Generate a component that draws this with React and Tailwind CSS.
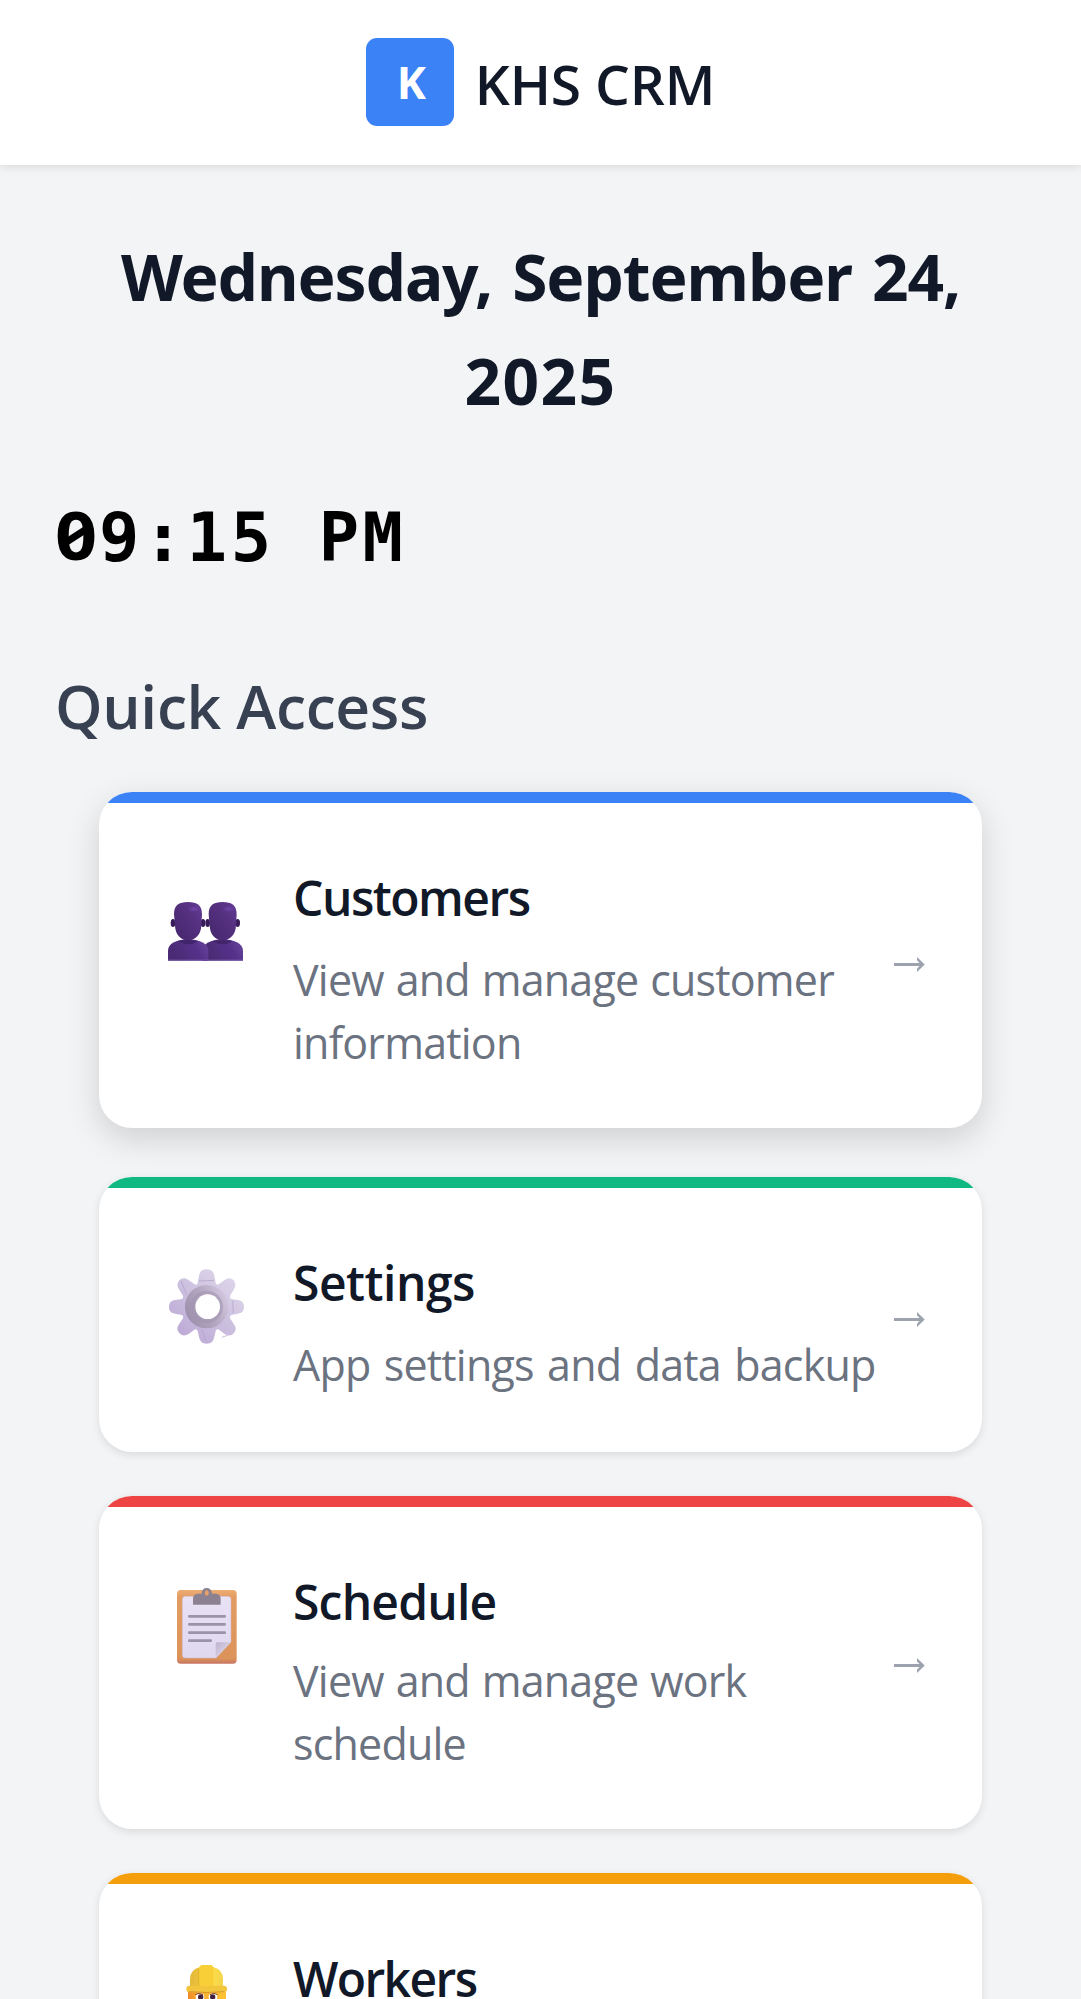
import React from "react";

function PeopleIcon() {
  return (
    <svg viewBox="54 12 228 228" className="h-[76px] w-[76px] overflow-visible">
      <defs>
        <linearGradient id="headFill" x1="0" y1="1" x2="1" y2="0">
          <stop offset="0" stopColor="#44266b" />
          <stop offset="0.6" stopColor="#553080" />
          <stop offset="1" stopColor="#633c95" />
        </linearGradient>
        <linearGradient id="bodyFill" x1="0" y1="0.3" x2="1" y2="0">
          <stop offset="0" stopColor="#4a2a74" />
          <stop offset="0.6" stopColor="#55328a" />
          <stop offset="1" stopColor="#6a469f" />
        </linearGradient>
        <radialGradient id="headGlow">
          <stop offset="0" stopColor="#7145a8" />
          <stop offset="1" stopColor="#7145a8" stopOpacity="0" />
        </radialGradient>
        <g id="bust">
          <ellipse cx="69" cy="129" rx="7" ry="12" fill="#371c59" />
          <ellipse cx="159" cy="129" rx="7" ry="12" fill="#371c59" />
          <path d="M54 242v-30c0-22 28-34 60-34s61 12 61 34v30z" fill="url(#bodyFill)" />
          <path d="M84 184q30-10 60 0-28 18-60 0z" fill="#3b1f5f" opacity=".7" />
          <path d="M72 103c0-27 14-37 42-37s42 10 42 37l-2 34c-1 26-18 44-40 44s-38-18-39-44z" fill="url(#headFill)" />
          <ellipse cx="132" cy="87" rx="20" ry="9" fill="url(#headGlow)" />
        </g>
      </defs>
      <use href="#bust" x="104" />
      <use href="#bust" />
      <path d="M54 240h225" stroke="#7a5ba6" strokeWidth="2" />
    </svg>
  );
}

function GearIcon() {
  return (
    <svg viewBox="54 57 228 228" className="h-[76px] w-[76px] overflow-visible">
      <defs>
        <linearGradient id="gearFill" gradientUnits="userSpaceOnUse" x1="90" y1="260" x2="240" y2="80">
          <stop offset="0" stopColor="#bda9d6" />
          <stop offset="0.5" stopColor="#cbbfdf" />
          <stop offset="1" stopColor="#ddd5e9" />
        </linearGradient>
        <linearGradient id="ringFill" x1="0" y1="0.7" x2="1" y2="0.2">
          <stop offset="0" stopColor="#9c8fac" />
          <stop offset="0.5" stopColor="#b3a8c1" />
          <stop offset="1" stopColor="#d4cae1" />
        </linearGradient>
      </defs>
      <path
        fill="url(#gearFill)"
        d="M147 77c2-12 8-19 23-19s21 7 23 19l4 22c2 5 6 6 10 3l17-12c9-7 20-7 27 1 7 9 6 18 1 27l-11 18c-3 6 0 11 7 12l16 2c11 2 18 8 18 21s-7 18-18 20l-16 3c-7 1-10 6-7 12l12 18c6 9 5 18-1 25-7 9-18 9-28 3l-16-12c-5-4-10-2-11 4l-5 20c-3 12-10 17-22 17s-19-5-22-17l-5-20c-1-6-6-8-11-4l-16 12c-10 6-21 6-28-3-7-7-8-16-2-25l12-18c4-6 1-11-6-12l-17-3c-11-2-18-7-18-20s7-19 18-21l17-2c7-1 9-6 6-12l-11-18c-6-9-6-18 1-27 8-8 18-8 27-1l18 12c4 3 9 2 10-3z"
      />
      <path d="M93 92l17 42M147 93l45-2M248 152l2 38M156 240l14 38M215 262l18-6" fill="none" stroke="#ad9ec4" strokeWidth="2" />
      <circle cx="170" cy="170" r="65" fill="url(#ringFill)" />
      <circle cx="170" cy="171" r="44" fill="none" stroke="#a194b0" strokeWidth="10" opacity=".6" />
      <circle cx="173" cy="170" r="37" fill="#fff" />
    </svg>
  );
}

function ClipboardIcon() {
  return (
    <svg viewBox="54 54 228 228" className="h-[76px] w-[76px] overflow-visible">
      <defs>
        <linearGradient id="boardFill" x1="0" y1="0" x2="0" y2="1">
          <stop offset="0" stopColor="#edad75" />
          <stop offset="0.1" stopColor="#e29c61" />
          <stop offset="0.93" stopColor="#dc935a" />
          <stop offset="1" stopColor="#c67562" />
        </linearGradient>
        <linearGradient id="paperFill" x1="0" y1="0" x2="0" y2="1">
          <stop offset="0" stopColor="#e9e1f4" />
          <stop offset="1" stopColor="#e0d8ef" />
        </linearGradient>
        <linearGradient id="foldFill" x1="0" y1="0" x2="0.7" y2="0.7">
          <stop offset="0" stopColor="#bdb2cd" />
          <stop offset="1" stopColor="#dcd5e7" />
        </linearGradient>
      </defs>
      <rect x="81" y="60" width="179" height="221" rx="11" fill="url(#boardFill)" />
      <path d="M106 79h128q9 0 9 9v128l-45 48h-92q-9 0-9-9V88q0-9 9-9z" fill="url(#paperFill)" stroke="#cbb5c9" strokeWidth="1.5" />
      <path d="M197 264v-41q0-6 6-6h40z" fill="url(#foldFill)" />
      <path d="M118 139h106M118 163h106M118 188h106M118 212h64" stroke="#9b93a8" strokeWidth="8.5" strokeLinecap="round" />
      <path d="M129 104V86q0-14 14-15h12q1-17 15-17t16 17h11q15 1 15 15v18z" fill="#8c8190" />
      <ellipse cx="170.500" cy="69" rx="6" ry="8" fill="#e6a369" />
    </svg>
  );
}

function WorkerIcon() {
  return (
    <svg viewBox="234 315 228 228" className="h-[76px] w-[76px] overflow-visible">
      <defs>
        <linearGradient id="helmetFill" x1="0" y1="0" x2="1" y2="0">
          <stop offset="0" stopColor="#e3b93a" />
          <stop offset="0.3" stopColor="#efc23b" />
          <stop offset="0.75" stopColor="#fbdc4a" />
          <stop offset="1" stopColor="#f2d44d" />
        </linearGradient>
        <linearGradient id="faceFill" x1="0" y1="0" x2="1" y2="0">
          <stop offset="0" stopColor="#ef8a2b" />
          <stop offset="0.3" stopColor="#fbac2c" />
          <stop offset="1" stopColor="#ffc233" />
        </linearGradient>
      </defs>
      <path d="M294 395h114v60q0 40-57 40t-57-40z" fill="url(#faceFill)" />
      <ellipse cx="330" cy="411" rx="13" ry="11" fill="#fff" />
      <ellipse cx="369" cy="411" rx="13" ry="11" fill="#fff" />
      <circle cx="332" cy="411" r="8" fill="#43203c" />
      <circle cx="368" cy="411" r="8" fill="#43203c" />
      <path d="M316 404q11-8 23 0M360 404q12-8 23 0" fill="none" stroke="#7b4a34" strokeWidth="3" />
      <path d="M300 383v-25q0-30 30-37 3-6 10-6h20q7 0 10 6 29 7 29 37v25z" fill="url(#helmetFill)" />
      <path d="M326 378v-52q2-11 14-11h19q10 0 11 9v54z" fill="#f9cf38" />
      <path d="M326 378v-52" stroke="#d5a82e" strokeWidth="2" />
      <rect x="289" y="377" width="122" height="20" rx="9" fill="#f2c53d" />
      <path d="M298 395q52 5 105 0" stroke="#d39a2d" strokeWidth="3" fill="none" />
    </svg>
  );
}

function ArrowIcon() {
  return (
    <svg viewBox="0 0 31 15" className="h-[15px] w-[31px]" fill="#9ca3af">
      <path d="M0 6h25.500L23 3.200V0l7.700 7.500L23 15v-3.200L25.500 9H0z" />
    </svg>
  );
}

const cards = [
  {
    title: "Customers", lines: ["View and manage customer", "information"], Icon: PeopleIcon,
    box: "h-[335.5px] mb-[49.5px] shadow-[0_11px_33px_rgba(0,0,0,0.15)]", bar: "bg-[#3b82f6]",
    titleTrack: "tracking-[-1.5px]", desc: "mt-5 [word-spacing:1.5px]", arrow: "pb-[2px]",
  },
  {
    title: "Settings", lines: ["App settings and data backup"], Icon: GearIcon,
    box: "h-[275px] mb-11 shadow-[0_2.75px_8.25px_rgba(0,0,0,0.1)]", bar: "bg-[#10b981]",
    titleTrack: "tracking-[-0.5px]", desc: "mt-5 [word-spacing:3px]", arrow: "pb-[2px]",
  },
  {
    title: "Schedule", lines: ["View and manage work", "schedule"], Icon: ClipboardIcon,
    box: "h-[333px] mb-11 shadow-[0_2.75px_8.25px_rgba(0,0,0,0.1)]", bar: "bg-[#ef4444]",
    titleTrack: "tracking-[-0.8px]", desc: "mt-[17px] [word-spacing:1.5px]", arrow: "pb-[5px]",
  },
  {
    title: "Workers", lines: [], Icon: WorkerIcon,
    box: "h-[275px] shadow-[0_2.75px_8.25px_rgba(0,0,0,0.1)]", bar: "bg-[#f59e0b]",
    titleTrack: "tracking-[-1.6px]", desc: "mt-5", arrow: "pb-[2px]",
  },
];

function Card({ title, lines, Icon, box, bar, titleTrack, desc, arrow }) {
  return (
    <article className={`flex shrink-0 flex-col overflow-hidden rounded-[33px] bg-white ${box}`}>
      <div className={`h-[11px] shrink-0 ${bar}`} />
      <div className="flex flex-1 pr-[57px] pl-[69px]">
        <div className="w-[125px] shrink-0 pt-[81px]">
          <Icon />
        </div>
        <div className="flex-1 pt-[65px] whitespace-nowrap">
          <h3 className={`text-[48px] leading-[60px] font-semibold text-[#111827] ${titleTrack}`}>{title}</h3>
          <p className={`text-[43px] leading-[63px] tracking-[-0.8px] text-[#6b7280] ${desc}`}>
            {lines.map((l) => (
              <span key={l} className="block">{l}</span>
            ))}
          </p>
        </div>
        <div className={`flex w-[31px] shrink-0 items-center ${arrow}`}>
          <ArrowIcon />
        </div>
      </div>
    </article>
  );
}

export default function App() {
  return (
    <div className="flex h-[1999px] w-full flex-col overflow-hidden bg-[#f3f4f6] font-['Open_Sans',sans-serif]">
      <header className="flex h-[165px] shrink-0 items-center justify-center gap-[21px] bg-white pb-px shadow-[0_2.75px_8.25px_rgba(0,0,0,0.1)]">
        <div className="flex size-[88px] items-center justify-center rounded-[11px] bg-[#3b82f6] pl-[3px] text-[44px] leading-none font-bold text-white">K</div>
        <h1 className="pt-1 text-[55px] leading-[88px] font-semibold tracking-[-0.16px] text-[#111827]">KHS CRM</h1>
      </header>
      <main className="flex flex-col px-[55px] pt-[60px]">
        <h2 className="text-center font-['Noto_Sans',sans-serif] text-[64px] leading-[103.5px] font-bold text-[#111827]">
          <span className="block tracking-[-1.1px] whitespace-nowrap [word-spacing:4.5px]">Wednesday, September 24,</span>
          <span className="block tracking-[1.4px]">2025</span>
        </h2>
        <div className="mt-[62px] flex h-[88px] font-['DejaVu_Sans_Mono',monospace] text-[67px] leading-[88px] font-bold tracking-[3.6px] whitespace-pre text-black">
          <span className="relative block w-[44px] font-['Noto_Sans',sans-serif] tracking-normal">
            <span className="block origin-left scale-x-110 leading-[80px]">0</span>
            <span className="absolute top-[38px] left-[10px] h-[7px] w-[23px] -rotate-[33deg] bg-black" />
          </span>
          <span>9:15 PM</span>
        </div>
        <h2 className="mt-[76px] text-[60.5px] leading-[96px] font-semibold tracking-[-0.34px] text-[#374151]">Quick Access</h2>
        <section className="mx-11 mt-[38px] flex flex-col">
          {cards.map((c) => (
            <Card key={c.title} {...c} />
          ))}
        </section>
      </main>
    </div>
  );
}
